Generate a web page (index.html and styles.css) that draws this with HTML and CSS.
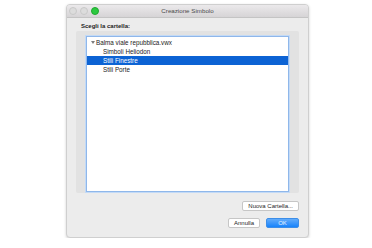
FILE: index.html
```html
<!DOCTYPE html>
<html>
    <head>
        <meta charset="UTF-8">
        <title>Creazione Simbolo</title>
        <link rel="stylesheet" href="styles.css">
    </head>
    <body>
        <div class="window">
            <div class="titlebar">
                <div class="lights">
                    <span class="light"></span>
                    <span class="light"></span>
                    <span class="light green"></span>
                </div>
                <div class="title">Creazione Simbolo</div>
            </div>

            <div class="content">
                <div class="label">Scegli la cartella:</div>

                <div class="group">
                    <div class="list">
                        <div class="row root"><span class="arrow"></span>Balma viale repubblica.vwx</div>
                        <div class="row child">Simboli Heliodon</div>
                        <div class="row child selected">Stili Finestre</div>
                        <div class="row child">Stili Porte</div>
                    </div>
                </div>

                <div class="actions">
                    <button class="btn">Nuova Cartella...</button>
                </div>

                <div class="actions footer">
                    <button class="btn">Annulla</button>
                    <button class="btn primary">OK</button>
                </div>
            </div>
        </div>
    </body>
</html>
```

FILE: styles.css
```css
body {
    margin: 0;
    background-color: #ffffff;
    font-family: "Liberation Sans", Arial, sans-serif;
    font-size: 6px;
    color: #1e1e1e;
}

.window {
    width: 241px;
    height: 232px;
    margin: 4px 0 0 66px;
    background-color: #ececec;
    border: 1px solid #cfcfcf;
    border-radius: 4px;
    box-shadow: 0 1px 3px rgba(0, 0, 0, 0.18);
    display: flex;
    flex-direction: column;
    overflow: hidden;
}

.titlebar {
    height: 12px;
    display: flex;
    align-items: center;
    position: relative;
    background: linear-gradient(#ebe9eb, #d6d4d6);
    border-bottom: 1px solid #c4c4c4;
}

.lights {
    display: flex;
    gap: 3px;
    padding-left: 2px;
}

.light {
    width: 6px;
    height: 6px;
    border-radius: 50%;
    background-color: #dcdcdc;
    border: 0.5px solid #c8c8c8;
}

.light.green {
    background-color: #2bc93f;
    border-color: #20a830;
}

.title {
    position: absolute;
    left: 0;
    right: 0;
    text-align: center;
    color: #4a4a4a;
    line-height: 12px;
    font-size: 6.2px;
}

.content {
    flex: 1;
    display: flex;
    flex-direction: column;
    padding: 4px 9px 0 9px;
}

.label {
    font-weight: bold;
    line-height: 8px;
    padding-left: 5px;
    margin-bottom: 1px;
}

.group {
    height: 155px;
    padding: 5px 10px 2px 10px;
    background-color: #e2e2e2;
    border-radius: 2px;
}

.list {
    height: 153px;
    background-color: #ffffff;
    border: 1px solid #8fb7ea;
    box-shadow: 0 0 0 1px #c3daf6;
    padding-top: 1px;
}

.row {
    height: 9px;
    line-height: 9px;
    font-size: 6.3px;
    color: #222222;
    white-space: nowrap;
}

.root {
    padding-left: 4px;
}

.arrow {
    display: inline-block;
    width: 0;
    height: 0;
    border-left: 2px solid transparent;
    border-right: 2px solid transparent;
    border-top: 3px solid #7d7d7d;
    margin-right: 1px;
    vertical-align: 1px;
}

.child {
    padding-left: 16px;
}

.selected {
    background-color: #0c63d4;
    color: #ffffff;
}

.actions {
    display: flex;
    justify-content: flex-end;
    gap: 6px;
    margin-top: 8px;
}

.footer {
    margin-top: 7px;
}

.btn {
    font-family: inherit;
    font-size: 6px;
    height: 10px;
    line-height: 8px;
    padding: 0 5px;
    margin: 0;
    background-color: #ffffff;
    color: #1e1e1e;
    border: 1px solid #c6c6c6;
    border-radius: 2px;
}

.btn.primary {
    width: 33px;
    background: linear-gradient(#63acfb, #1883fb);
    border-color: #3d8ee8;
    color: #e9f3ff;
}
```
